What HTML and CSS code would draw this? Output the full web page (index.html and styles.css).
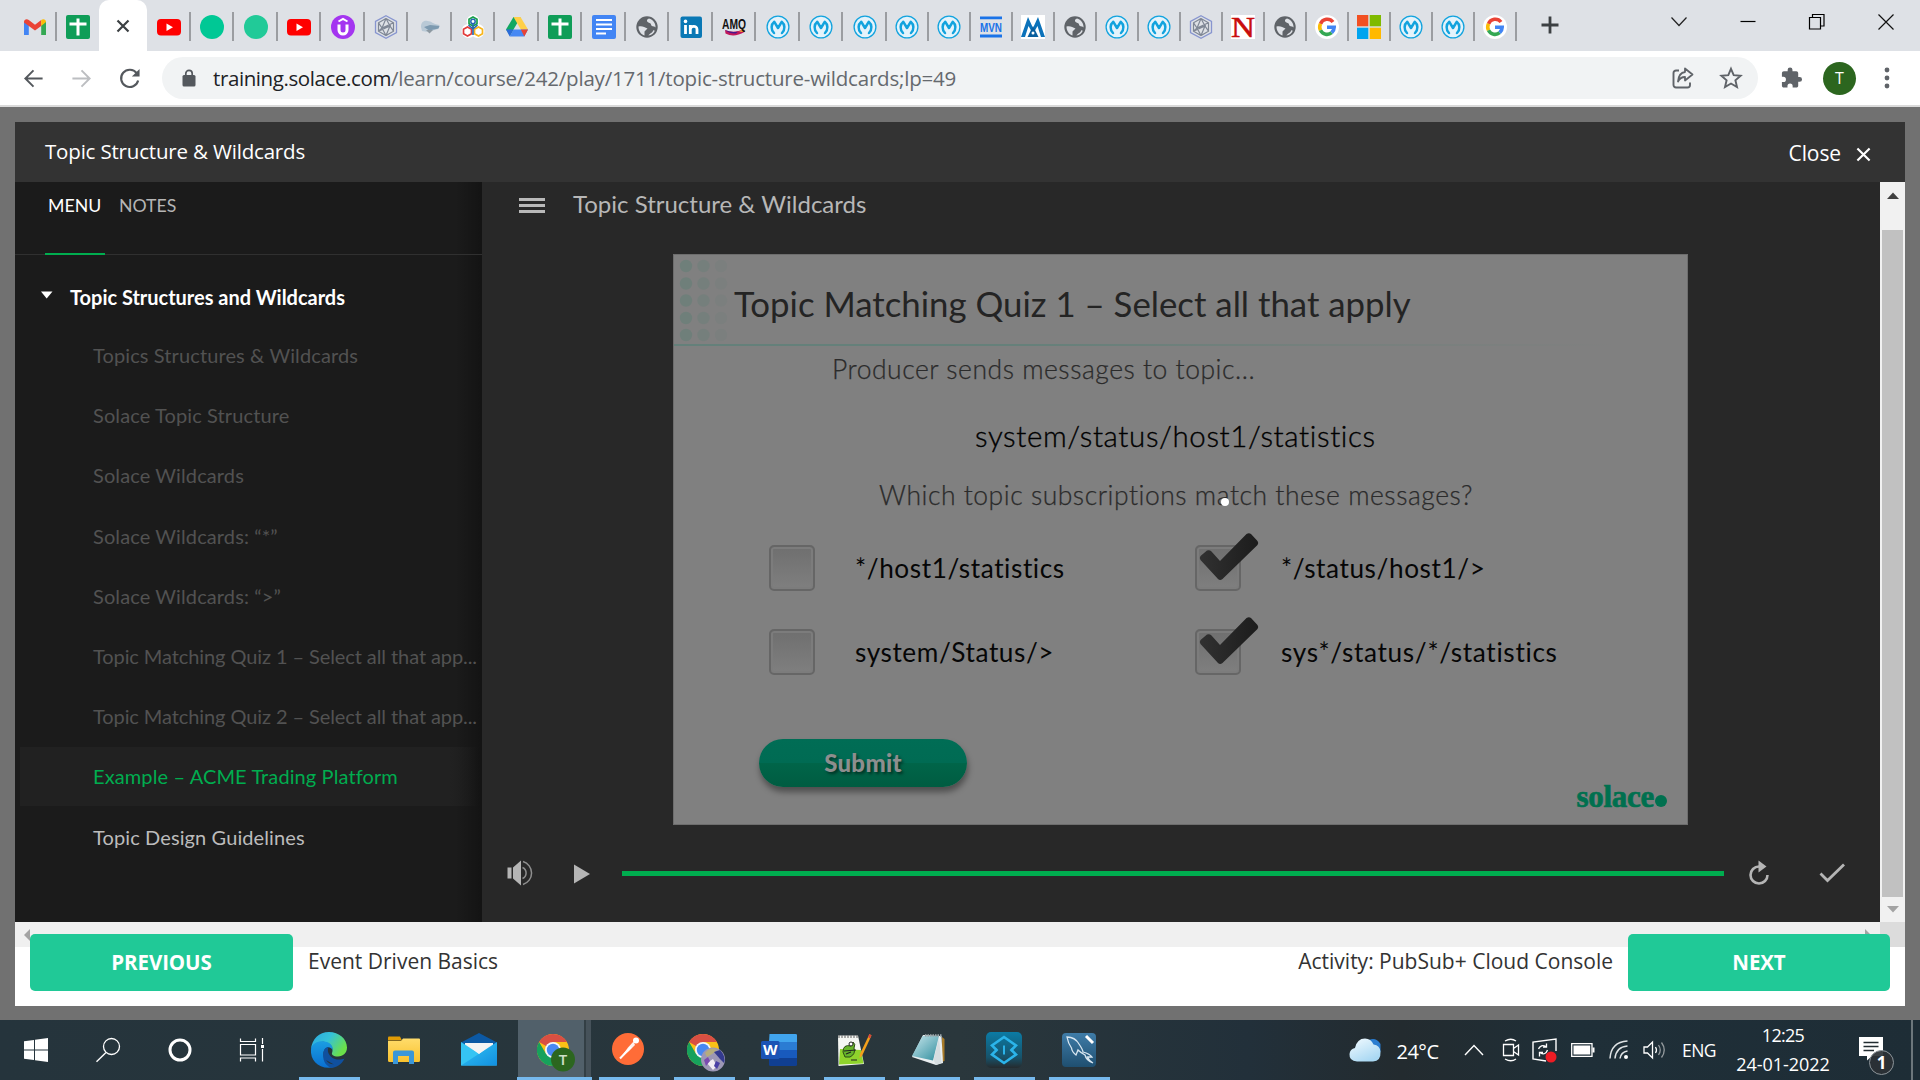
FILE: index.html
```html
<!DOCTYPE html>
<html lang="en">
<head>
<meta charset="utf-8">
<title>Topic Structure &amp; Wildcards</title>
<link rel="stylesheet" href="styles.css">
</head>
<body>
<svg class="defs" width="0" height="0">
  <defs>
    <linearGradient id="g-edge" x1="0" y1="0" x2="1" y2="0.5"><stop offset="0" stop-color="#2aa7e0"/><stop offset="0.5" stop-color="#35c1d8"/><stop offset="1" stop-color="#6be04a"/></linearGradient>
    <linearGradient id="g-edge2" x1="0" y1="0" x2="0" y2="1"><stop offset="0" stop-color="#1b9de2"/><stop offset="1" stop-color="#0a6fd0"/></linearGradient>
    <linearGradient id="g-mail" x1="0" y1="0" x2="1" y2="1"><stop offset="0" stop-color="#33c6f4"/><stop offset="1" stop-color="#128fe0"/></linearGradient>
    <linearGradient id="g-cloud" x1="0" y1="0" x2="0.6" y2="1"><stop offset="0" stop-color="#f3fbff"/><stop offset="1" stop-color="#a9d8f3"/></linearGradient>
    <linearGradient id="g-s" x1="0" y1="0" x2="0" y2="1"><stop offset="0" stop-color="#0b7ba5"/><stop offset="0.7" stop-color="#17536b"/><stop offset="1" stop-color="#252b2e"/></linearGradient>
    <linearGradient id="g-wb" x1="0" y1="0" x2="0" y2="1"><stop offset="0" stop-color="#3f7ca8"/><stop offset="1" stop-color="#1f4f70"/></linearGradient>
    <linearGradient id="g-note" x1="0" y1="0" x2="1" y2="1"><stop offset="0" stop-color="#c8e6ec"/><stop offset="1" stop-color="#2f8e9e"/></linearGradient>
    <linearGradient id="g-folder" x1="0" y1="0" x2="0" y2="1"><stop offset="0" stop-color="#ffdc6b"/><stop offset="1" stop-color="#f9c22e"/></linearGradient>
    <linearGradient id="g-tick" x1="0" y1="0" x2="1" y2="0"><stop offset="0" stop-color="#313131"/><stop offset="1" stop-color="#1c1c1c"/></linearGradient>
  </defs>
  <symbol id="mule" viewBox="0 0 24 24"><circle cx="12" cy="12" r="10.9" fill="#e4f3fb" stroke="#12a3de" stroke-width="1.3"/><path d="M8 18C4.600 14.500 5 9.500 8.300 6.800L12 13L15.700 6.800C19 9.500 19.400 14.500 16 18" fill="none" stroke="#12a3de" stroke-width="2.500" stroke-linejoin="round" stroke-linecap="round"/></symbol>
  <symbol id="sheets" viewBox="0 0 24 24"><rect width="24" height="24" rx="2" fill="#0f9d58"/><path d="M12 3.500V20.500M3.500 9H20.500" stroke="#fff" stroke-width="3"/></symbol>
  <symbol id="yt" viewBox="0 0 24 24"><rect y="4" width="24" height="16.500" rx="4" fill="#f00"/><path d="M9.500 8.500L16 12.200L9.500 16Z" fill="#fff"/></symbol>
  <symbol id="globe" viewBox="0 0 24 24"><circle cx="12" cy="12" r="10.700" fill="#5f6368"/><path d="M3.500 11.500C7 10.500 9.500 12 12.500 13.500L9.500 16.500V20.500C6 19.500 3.500 16 3.500 11.500ZM14 3.500C11 4.500 11.500 7 14.500 8C17 8.500 15 11.500 19 11.500C20 11.500 20.500 12.500 20.500 13C21 8.500 18 4.500 14 3.500Z" fill="#dee1e6"/><path d="M13.500 20.400C14.500 18.500 18 17.500 18.200 15.200C18.800 15 19.500 15.500 19.800 15.700C18.800 18.200 16.500 20 13.500 20.400Z" fill="#dee1e6"/></symbol>
  <symbol id="google" viewBox="0 0 24 24"><circle cx="12" cy="12" r="12" fill="#fff"/><g fill="none" stroke-width="3.600"><path d="M18 7A7.300 7.300 0 0 0 5.500 8.800" stroke="#ea4335"/><path d="M5.500 8.800A7.300 7.300 0 0 0 5.500 15.300" stroke="#fbbc05"/><path d="M5.500 15.300A7.300 7.300 0 0 0 16.700 17.600" stroke="#34a853"/><path d="M16.700 17.600A7.300 7.300 0 0 0 19.200 12.200H12" stroke="#4285f4"/></g></symbol>
  <symbol id="hexa" viewBox="0 0 24 24"><path d="M12 .8L22.500 6.500V17.500L12 23.200L1.500 17.500V6.500Z" fill="none" stroke="#8795cf" stroke-width="1.300"/><path d="M12 3.500L19.500 7.800V16.200L12 20.500L4.500 16.200V7.800ZM12 3.500L8 13L19.500 7.800M4.500 16.200L16 11L12 20.500M4.500 7.800L8 13L12 20.500M19.500 16.200L16 11L12 3.500M4.500 16.200L8 13L16 11" fill="none" stroke="#7f8795" stroke-width="1.200"/></symbol>
  <symbol id="chrome" viewBox="0 0 32 40"><circle cx="16" cy="20" r="16" fill="#fbc116"/><path d="M16 20L2.100 12A16 16 0 0 1 29.900 12H16Z" fill="#d94f43"/><path d="M2.100 12A16 16 0 0 0 16 36L23 24L9.100 24Z" fill="#17a15c"/><circle cx="16" cy="20" r="8" fill="#f4f6f8"/><circle cx="16" cy="20" r="6.200" fill="#4788f2"/></symbol>
</svg>

<header class="tabs">
  <div class="tab"><svg viewBox="0 0 24 24"><path d="M1 20V6.500L5.800 10V20Z" fill="#4285f4"/><path d="M23 20V6.500L18.200 10V20Z" fill="#34a853"/><path d="M1 7C1 4 4 3.500 5.800 5L12 9.700L18.200 5V11L12 15.500L1 7.500Z" fill="#ea4335"/><path d="M18.200 5C20 3.500 23 4 23 7L18.200 11Z" fill="#fbbc04"/></svg></div>
  <div class="tab plain"><svg><use href="#sheets"/></svg></div>
  <div class="tab active"><svg viewBox="0 0 24 24"><path d="M6.500 6.500L17.500 17.500M17.500 6.500L6.500 17.500" stroke="#3c4043" stroke-width="2.200"/></svg></div>
  <div class="tab"><svg><use href="#yt"/></svg></div>
  <div class="tab"><svg viewBox="0 0 24 24"><circle cx="12" cy="12" r="12" fill="#00c895"/></svg></div>
  <div class="tab"><svg viewBox="0 0 24 24"><circle cx="12" cy="12" r="12" fill="#21ca98"/></svg></div>
  <div class="tab"><svg><use href="#yt"/></svg></div>
  <div class="tab"><svg viewBox="0 0 24 24"><circle cx="12" cy="12" r="12" fill="#a435f0"/><path d="M7.500 6.500L12 4L16.500 6.500" fill="none" stroke="#fff" stroke-width="2"/><path d="M8 9.500V15A4 4 0 0 0 16 15V9.500" fill="none" stroke="#fff" stroke-width="3"/></svg></div>
  <div class="tab"><svg><use href="#hexa"/></svg></div>
  <div class="tab"><svg viewBox="0 0 24 24"><path d="M3 12C3 7 6 5 9.500 6C14 6 14 9 21.500 10L20 14L10 17L4 16Z" fill="#b9c9d6"/><path d="M6 12L12 10L21.500 11L20.500 13.500L11 15.500Z" fill="#7d9ab0"/><path d="M8 15L15 15L11.500 18.500Z" fill="#8d99a2"/></svg></div>
  <div class="tab"><svg viewBox="0 0 24 24"><circle cx="12" cy="6.500" r="6.500" fill="#fff"/><circle cx="7.500" cy="16" r="7" fill="#fff"/><circle cx="16.500" cy="16" r="7" fill="#fff"/><path d="M12 2L16 4.200V8.800L12 11L8 8.800V4.200Z" fill="none" stroke="#18a04c" stroke-width="1.700"/><path d="M6.500 12L10.500 14.200V18.800L6.500 21L2.500 18.800V14.200Z" fill="none" stroke="#e23a3a" stroke-width="1.700"/><path d="M17.500 12L21.500 14.200V18.800L17.500 21L13.500 18.800V14.200Z" fill="none" stroke="#f7b51c" stroke-width="1.700"/><circle cx="12" cy="6.500" r="2.200" fill="none" stroke="#2468b2" stroke-width="1.500"/><path d="M12 9V20M12 14L7.500 10M12 14L16.500 10" stroke="#2468b2" stroke-width="1.600"/></svg></div>
  <div class="tab"><svg viewBox="0 0 24 24"><path d="M8.500 2H15.500L12 8.500L5 20.500L1 14.500Z" fill="#11a861"/><path d="M8.500 2H15.500L23 14.500H15.800Z" fill="#ffcf48"/><path d="M4.700 21.500L8.500 14.500H23L19.300 21.500Z" fill="#4688f4"/><path d="M1 14.500L8.500 14.500L4.700 21.500Z" fill="#2a6bd8"/><path d="M15.800 14.500H23L19.300 21.500Z" fill="#e94335"/></svg></div>
  <div class="tab"><svg><use href="#sheets"/></svg></div>
  <div class="tab"><svg viewBox="0 0 24 24"><rect width="24" height="24" rx="2" fill="#4285f4"/><path d="M4 5H20M4 9.500H20M4 14H20M4 18.500H14" stroke="#fff" stroke-width="2.200"/></svg></div>
  <div class="tab"><svg><use href="#globe"/></svg></div>
  <div class="tab"><svg viewBox="0 0 24 24"><rect x="1.500" y="1.500" width="21.500" height="21.500" rx="2" fill="#0a78b5"/><path d="M6.500 10V19M11.300 10V19M11.300 19V14.500C11.300 10.500 18 10 18 14.500V19" stroke="#fff" stroke-width="2.800" fill="none"/><circle cx="6.500" cy="6.400" r="1.800" fill="#fff"/></svg></div>
  <div class="tab"><svg viewBox="0 0 24 24"><path d="M3 15Q12 19 22 14L22.500 17Q12 23 3.500 18.500Z" fill="#c2185b"/><path d="M3 15Q10 18 16 16.500L14 18.500Q8 19 3 15Z" fill="#4a148c"/><path d="M17 16.500L22 14L22.500 17Z" fill="#fbc02d"/><text x="12" y="14" text-anchor="middle" class="amq" textLength="24" lengthAdjust="spacingAndGlyphs">AMQ</text></svg></div>
  <div class="tab"><svg><use href="#mule"/></svg></div>
  <div class="tab"><svg><use href="#mule"/></svg></div>
  <div class="tab"><svg><use href="#mule"/></svg></div>
  <div class="tab narrow"><svg><use href="#mule"/></svg></div>
  <div class="tab narrow"><svg><use href="#mule"/></svg></div>
  <div class="tab narrow"><svg viewBox="0 0 24 24"><path d="M1 2.800H23M1 21H23" stroke="#1a73e8" stroke-width="2.800"/><text x="12" y="16.700" text-anchor="middle" class="mvn" textLength="22" lengthAdjust="spacingAndGlyphs">MVN</text></svg></div>
  <div class="tab narrow"><svg viewBox="0 0 24 24"><rect width="24" height="24" fill="#fff"/><path d="M0 22L7 2L12 13L17 2L24 22H20L16.500 11L12 19L7.500 11L4 22Z" fill="#0b72ba"/><path d="M12 11L17.500 22H6.500Z" fill="#0a5f9e"/><circle cx="12" cy="18" r="1.500" fill="#fff"/></svg></div>
  <div class="tab narrow"><svg><use href="#globe"/></svg></div>
  <div class="tab narrow"><svg><use href="#mule"/></svg></div>
  <div class="tab narrow"><svg><use href="#mule"/></svg></div>
  <div class="tab narrow"><svg><use href="#hexa"/></svg></div>
  <div class="tab narrow"><svg viewBox="0 0 24 24"><rect width="24" height="24" fill="#fff"/><text x="12" y="22" text-anchor="middle" class="nn" textLength="24" lengthAdjust="spacingAndGlyphs">N</text></svg></div>
  <div class="tab narrow"><svg><use href="#globe"/></svg></div>
  <div class="tab narrow"><svg><use href="#google"/></svg></div>
  <div class="tab narrow"><svg viewBox="0 0 24 24"><path d="M0 0H11.300V11.300H0Z" fill="#f25022"/><path d="M12.700 0H24V11.300H12.700Z" fill="#7fba00"/><path d="M0 12.700H11.300V24H0Z" fill="#00a4ef"/><path d="M12.700 12.700H24V24H12.700Z" fill="#ffb900"/></svg></div>
  <div class="tab narrow"><svg><use href="#mule"/></svg></div>
  <div class="tab narrow"><svg><use href="#mule"/></svg></div>
  <div class="tab narrow"><svg><use href="#google"/></svg></div>
  <div class="newtab"><svg viewBox="0 0 24 24"><path d="M12 3.500V20.500M3.500 12H20.500" stroke="#3c4043" stroke-width="2.800"/></svg></div>
  <div class="winbtns">
    <svg viewBox="0 0 20 20"><path d="M2.500 5.500L10 13.500L17.500 5.500" fill="none" stroke="#222" stroke-width="1.200"/></svg>
    <svg viewBox="0 0 20 20"><path d="M2.500 9.500H17.500" stroke="#000" stroke-width="1.200"/></svg>
    <svg viewBox="0 0 20 20"><path d="M2.500 5.500H13.500V17H2.500ZM5.500 5.500V2.500H17V14H13.500" fill="none" stroke="#000" stroke-width="1.200"/></svg>
    <svg viewBox="0 0 20 20"><path d="M2.500 2.500L17.500 17.500M17.500 2.500L2.500 17.500" stroke="#111" stroke-width="1.200"/></svg>
  </div>
</header>

<div class="toolbar">
  <div class="nav"><svg viewBox="0 0 24 24"><path d="M21.500 12H4M12 3.500L3.500 12L12 20.500" fill="none" stroke="#54585d" stroke-width="2"/></svg></div>
  <div class="nav"><svg viewBox="0 0 24 24"><path d="M2.500 12H20M12 3.500L20.500 12L12 20.500" fill="none" stroke="#bcbec1" stroke-width="2"/></svg></div>
  <div class="nav"><svg viewBox="0 0 24 24"><path d="M19.500 6.500A9 9 0 1 0 21 14" fill="none" stroke="#54585d" stroke-width="2.200"/><path d="M22.500 2V10H14.500Z" fill="#54585d"/></svg></div>
  <div class="omnibox">
    <svg class="lock" viewBox="0 0 14 18"><rect x=".5" y="6" width="13" height="11.500" rx="1.500" fill="#54585d"/><path d="M3.800 7V4.500A3.200 3.200 0 0 1 10.200 4.500V7" fill="none" stroke="#54585d" stroke-width="1.700"/></svg>
    <div class="url"><span>training.solace.com</span>/learn/course/242/play/1711/topic-structure-wildcards;lp=49</div>
    <svg class="share" viewBox="0 0 24 24"><path d="M8 4.500H5A2.500 2.500 0 0 0 2.500 7V19A2.500 2.500 0 0 0 5 21.500H16.500A2.500 2.500 0 0 0 19 19V16.500" fill="none" stroke="#5f6368" stroke-width="1.900"/><path d="M14 2.500L21.500 8.500L14 14.500V11C10.500 11 8.500 12.500 7 15.500C7.500 10 10 6.500 14 6Z" fill="none" stroke="#5f6368" stroke-width="1.800" stroke-linejoin="round"/></svg>
    <svg class="star" viewBox="0 0 24 24"><path d="M12 2.800L14.700 9.200L21.600 9.800L16.400 14.300L18 21.100L12 17.500L6 21.100L7.600 14.300L2.400 9.800L9.300 9.200Z" fill="none" stroke="#5f6368" stroke-width="1.900"/></svg>
  </div>
  <svg class="ext" viewBox="0 0 24 24"><path d="M20.500 11H19V7C19 5.900 18.100 5 17 5H13V3.500A2.500 2.500 0 0 0 8 3.500V5H4C2.900 5 2 5.900 2 7V10.800H3.500A2.700 2.700 0 0 1 3.500 16.200H2V20C2 21.100 2.900 22 4 22H7.800V20.500A2.700 2.700 0 0 1 13.200 20.500V22H17C18.100 22 19 21.100 19 20V16H20.500A2.500 2.500 0 0 0 20.500 11Z" fill="#5f6368"/></svg>
  <div class="avatar">T</div>
  <svg class="dots3" viewBox="0 0 6 22"><circle cx="3" cy="3" r="2.400" fill="#5f6368"/><circle cx="3" cy="11" r="2.400" fill="#5f6368"/><circle cx="3" cy="19" r="2.400" fill="#5f6368"/></svg>
</div>

<main class="page">
  <section class="modal">
    <div class="modal-head">
      <h1>Topic Structure &amp; Wildcards</h1>
      <div class="close">Close <svg viewBox="0 0 16 16"><path d="M1.500 1.500L14.500 14.500M14.500 1.500L1.500 14.500" stroke="#fff" stroke-width="2.300"/></svg></div>
    </div>
    <div class="player">
      <aside class="side">
        <div class="side-tabs"><span class="on">MENU</span><span>NOTES</span></div>
        <div class="group"><svg viewBox="0 0 12 8"><path d="M0 .5H11.500L5.700 7.500Z" fill="#fff"/></svg>Topic Structures and Wildcards</div>
        <ul>
          <li>Topics Structures &amp; Wildcards</li>
          <li>Solace Topic Structure</li>
          <li>Solace Wildcards</li>
          <li>Solace Wildcards: “*”</li>
          <li>Solace Wildcards: “&gt;”</li>
          <li class="long">Topic Matching Quiz 1 – Select all that app...</li>
          <li class="long">Topic Matching Quiz 2 – Select all that app...</li>
          <li class="current">Example – ACME Trading Platform</li>
          <li class="open">Topic Design Guidelines</li>
        </ul>
      </aside>
      <div class="stage">
        <div class="stage-head"><svg viewBox="0 0 26 16"><path d="M0 1.500H26M0 7.500H26M0 13.500H26" stroke="#b9b9b9" stroke-width="3"/></svg>Topic Structure &amp; Wildcards</div>
        <div class="slide">
          <div class="slide-head">
            <svg class="dotgrid" viewBox="0 0 50 90"><g fill="#6f7f7a"><circle cx="12" cy="11" r="6.200"/><circle cx="12" cy="28.500" r="6.200"/><circle cx="12" cy="45.500" r="6.200"/><circle cx="12" cy="63" r="6.200"/><circle cx="12" cy="80" r="6.200"/></g><g fill="#757f7c"><circle cx="29.500" cy="11" r="6.200"/><circle cx="29.500" cy="28.500" r="6.200"/><circle cx="29.500" cy="45.500" r="6.200"/><circle cx="29.500" cy="63" r="6.200"/><circle cx="29.500" cy="80" r="6.200"/></g><g fill="#7b7f7e"><circle cx="47" cy="11" r="6.200"/><circle cx="47" cy="28.500" r="6.200"/><circle cx="47" cy="45.500" r="6.200"/><circle cx="47" cy="63" r="6.200"/><circle cx="47" cy="80" r="6.200"/></g></svg>
            <h2>Topic Matching Quiz 1 – Select all that apply</h2>
          </div>
          <div class="rule"></div>
          <p class="producer">Producer sends messages to topic...</p>
          <p class="topic">system/status/host1/statistics</p>
          <p class="which">Which topic subscriptions match these messages?<i></i></p>
          <div class="options">
            <label><b class="box"></b><span class="o1">*/host1/statistics</span></label>
            <label><b class="box on"><svg viewBox="0 0 60 48"><path d="M1.500 23L8 17.500Q10.500 16.500 12.500 18.500L21 28L47.500 1Q50 -.5 52 1L58.500 8Q60 10 58.500 12L23.500 46Q21 48 19 46L1.500 27Q0 25 1.500 23Z" fill="url(#g-tick)"/></svg></b><span class="o2">*/status/host1/&gt;</span></label>
            <label><b class="box"></b><span class="o3">system/Status/&gt;</span></label>
            <label><b class="box on"><svg viewBox="0 0 60 48"><path d="M1.500 23L8 17.500Q10.500 16.500 12.500 18.500L21 28L47.500 1Q50 -.5 52 1L58.500 8Q60 10 58.500 12L23.500 46Q21 48 19 46L1.500 27Q0 25 1.500 23Z" fill="url(#g-tick)"/></svg></b><span class="o4">sys*/status/*/statistics</span></label>
          </div>
          <div class="slide-foot">
            <button class="submit">Submit</button>
            <div class="logo"><span>solace</span><i></i></div>
          </div>
        </div>
        <div class="controls">
          <svg class="vol" viewBox="0 0 26 26"><path d="M.5 7.500H4.500V18.500H.5ZM6 7.500L14 .5V25.500L6 18.500Z" fill="#b5b5b5"/><path d="M15.500 7.500A6 6 0 0 1 15.500 18.500M16 1.500A12 12 0 0 1 16 24.500" fill="none" stroke="#8f8f8f" stroke-width="1.500"/></svg>
          <svg class="play" viewBox="0 0 16 20"><path d="M0 .5V19.500L16 10Z" fill="#b5b5b5"/></svg>
          <div class="bar"></div>
          <svg class="replay" viewBox="0 0 22 26"><path d="M11 6.500A8.500 8.500 0 1 0 19.500 15" fill="none" stroke="#b5b5b5" stroke-width="2.600"/><path d="M10.500 .5L18.500 6.500L10.500 12.500Z" fill="#b5b5b5"/></svg>
          <svg class="tick" viewBox="0 0 26 20"><path d="M1.500 10.500L8.500 17.500L25 1.500" fill="none" stroke="#b5b5b5" stroke-width="2.800"/></svg>
        </div>
      </div>
      <div class="vbar"><svg viewBox="0 0 12 7"><path d="M0 7H12L6 .5Z" fill="#404040"/></svg><div></div><svg viewBox="0 0 12 7"><path d="M0 0H12L6 6.500Z" fill="#a3a3a3"/></svg></div>
    </div>
    <div class="modal-foot">
      <div class="hbar">
        <svg viewBox="0 0 6 12"><path d="M6 0V12L0 6Z" fill="#a3a3a3"/></svg>
        <svg class="r" viewBox="0 0 6 12"><path d="M0 0V12L6 6Z" fill="#a3a3a3"/></svg><b></b>
      </div>
      <div class="foot-row">
        <button class="btn prev">PREVIOUS</button><span>Event Driven Basics</span>
        <span class="act">Activity: PubSub+ Cloud Console</span><button class="btn next">NEXT</button>
      </div>
    </div>
  </section>
</main>

<footer class="taskbar">
  <div class="start"><svg viewBox="0 0 24 24"><path d="M0 3.300L10 1.900V11.500H0ZM11 1.700L24 0V11.500H11ZM0 12.500H10V22.100L0 20.700ZM11 12.500H24V24L11 22.300Z" fill="#fff"/></svg></div>
  <div class="start"><svg viewBox="0 0 24 24"><circle cx="15.500" cy="8.500" r="8" fill="none" stroke="#fff" stroke-width="1.300"/><path d="M10 14.500L.5 23.800" stroke="#fff" stroke-width="1.400"/></svg></div>
  <div class="start"><svg viewBox="0 0 24 24"><circle cx="12" cy="12" r="10" fill="none" stroke="#fff" stroke-width="3"/></svg></div>
  <div class="start"><svg viewBox="0 0 24 24"><path d="M.5 .5V3.500H15.500V.5M.5 23.500V20H15.500V23.500M.5 6.500H15.500V17H.5ZM22.500 0V6M22.500 11V23.500" fill="none" stroke="#fff" stroke-width="1.200"/><path d="M21 7H24V10H21Z" fill="#fff"/></svg></div>
  <div class="app first"><svg viewBox="0 0 36 36"><path d="M18 0C28 0 36 7 36 15.500C36 21 32 24.500 27 24.500C22 24.500 20.500 22.500 21 21C22 19 22.500 12 14 10C8 9 2 12 0 17C1 7 8 0 18 0Z" fill="url(#g-edge)"/><path d="M0 17C1 11 8 8.500 13.500 9.500C20 10.500 22.500 15 21.500 18C19 13 13 15 12.500 21C12 28 17 35 23 35.300C8 38 -1 29 0 17Z" fill="url(#g-edge2)"/><path d="M15 28C18.500 34 27 34 33.500 26.500C30.500 33 25 35.800 20 35.800C14 33.500 11 27 12.500 20C13 17 15 14.500 18 15C15.500 17 17 25 24 27C27.500 28 31 27.500 33.500 26.500C31 31 26 33 22 32Z" fill="#10509e"/></svg></div>
  <div class="app noline"><svg viewBox="0 0 36 36"><path d="M2 5.500Q2 4.500 3 4.500H14L16 8.500H2Z" fill="#e19c05"/><path d="M2 9H15L17 6.500H33Q34 6.500 34 7.500V28.500Q34 30 32.500 30H3.500Q2 30 2 28.500Z" fill="url(#g-folder)"/><path d="M7 32V20.500Q7 18.500 9 18.500H26Q28 18.500 28 20.500V32H23V24H12V32Z" fill="#3b97d8"/></svg></div>
  <div class="app noline"><svg viewBox="0 0 36 36"><path d="M0 10.500L18 1L36 10.500L30 15H6Z" fill="#0c59a4"/><path d="M4 11H32V24H4Z" fill="#f2f2f2"/><path d="M0 10L36 33.500H0Z" fill="#35c4f3"/><path d="M36 10V33.500H0Z" fill="url(#g-mail)"/><path d="M4 11H32L18 22Z" fill="#f4f4f4"/></svg></div>
  <div class="app focus"><svg class="ch" viewBox="0 0 38 40"><use href="#chrome" width="32" height="40" y="-2"/><circle cx="26" cy="27.500" r="12" fill="#2c661f"/><text x="26" y="33" text-anchor="middle" class="bt">T</text></svg></div>
  <div class="app"><svg viewBox="0 0 36 36"><circle cx="17" cy="17" r="16" fill="#ff6c37"/><path d="M9.500 26L17 15.500L22.500 9.500L24 13L18 19Z" fill="#fff" opacity=".9"/><circle cx="25" cy="8.500" r="3" fill="#fff"/><path d="M9 26.500L20 15" stroke="#fff" stroke-width="2"/></svg></div>
  <div class="app"><svg class="ch" viewBox="0 0 38 40"><use href="#chrome" width="32" height="40" y="-2"/><circle cx="26" cy="27.500" r="12" fill="#9c97b5"/><path d="M18 21Q24 14 30 18Q26 22 20 25Z" fill="#b5ad7d"/><path d="M27 20L33 18Q39 24 37 31L33 27Z" fill="#333a8e"/><path d="M20 31L26 27L30 34L26 38Z" fill="#f1ecf4"/><path d="M17 28L21 25L23 29L19 34Z" fill="#7a4bb0"/><path d="M29 29L33 31L30 37L27 34Z" fill="#4a3fa5"/></svg></div>
  <div class="app"><svg viewBox="0 0 36 36"><path d="M8.500 2H34.500Q36 2 36 3V10H8Z" fill="#41a5ee"/><path d="M8 10H36V18H8Z" fill="#2b7cd3"/><path d="M8 18H36V26H8Z" fill="#185abd"/><path d="M8 26H36V32.500Q36 34 34.500 34H9.500Q8 34 8 32.500Z" fill="#103f91"/><rect y="9" width="18.500" height="18" rx="1.500" fill="#1a53b5"/><text x="9.300" y="22.800" text-anchor="middle" class="ww">W</text></svg></div>
  <div class="app"><svg viewBox="0 0 36 36"><path d="M2 3.500H22L28 32L2.500 34Z" fill="#f5f7f3"/><path d="M4 17L25 18L27.500 31.500L3 32.500Z" fill="#8fd32c"/><path d="M3 3V6M6 3V6M9 3V6M12 3V6M15 3V6M18 3V6M21 3V6" stroke="#777" stroke-width="1.200"/><path d="M7 20Q7 12 15 14L17 10Q20 12 18 16Q20 22 14 25L9 25Z" fill="#67b52a" stroke="#2b4a14" stroke-width="1"/><circle cx="15" cy="12" r="2" fill="#fff" stroke="#222"/><path d="M8 19L20 18M10 22L15 20M15 28H21" stroke="#222" stroke-width="1.200"/><path d="M33.500 2L35.500 3.500L26 24L23.500 26L24 22Z" fill="#f3a01c"/><path d="M33.500 2L35.500 3.500L34 6.500L32 5Z" fill="#d6453c"/></svg></div>
  <div class="app"><svg viewBox="0 0 36 36"><path d="M31 5L33.500 7V29L30 30Z" fill="#a87b28"/><path d="M12 3L30.500 4L32 31L25 33L1 25Z" fill="#e9eef0"/><path d="M11.500 4H28L22 28.500L1 24Z" fill="url(#g-note)"/><path d="M14 3.500H31" stroke="#9aa7ab" stroke-width="2.500" stroke-dasharray="1.500 1"/><path d="M28 6L30.500 31L25 33L22.500 28Z" fill="#d5dde0"/></svg></div>
  <div class="app"><svg viewBox="0 0 36 36"><rect width="36" height="36" rx="5" fill="url(#g-s)"/><path d="M11.500 19L6 13.500L18 5L30 13.500L24.500 19M11.500 17L6 22.500L18 31L30 22.500L24.500 17" fill="none" stroke="#2bb4ea" stroke-width="2.600"/><path d="M18 13.500V22.500" stroke="#2bb4ea" stroke-width="2"/></svg></div>
  <div class="app"><svg viewBox="0 0 36 36"><rect x="1" y="1" width="34" height="34" rx="4" fill="url(#g-wb)"/><path d="M6 5Q14 5 18 12Q22 18 22 20Q29 22 31 25L26.500 25Q28 29 32 31Q25 28 24 23Q19 20 17 18L15 23Q11 20 10.500 16Q7 11 6 5Z" fill="none" stroke="#d8e6f0" stroke-width="1.300"/><path d="M25 4L29 8L32 11" stroke="#fff" stroke-width="3"/></svg></div>
  <div class="tray">
    <div><svg width="32" height="24" viewBox="0 0 32 24"><path d="M20 2Q27 -1 31.500 6V14H20Z" fill="#2b7dd0"/><path d="M8 23.500Q0 23 .5 16Q1 11 6 10Q8 .5 16 .5Q22 .5 24.500 6.500Q31 7 31.500 14Q32 23 24 23.500Z" fill="url(#g-cloud)"/></svg></div>
    <div class="temp">24°C</div>
    <div><svg width="20" height="12" viewBox="0 0 20 12"><path d="M1 11L10 1.500L19 11" fill="none" stroke="#fff" stroke-width="1.400"/></svg></div>
    <div><svg width="18" height="24" viewBox="0 0 18 24"><path d="M1.500 6.500H11.500V17.500H1.500ZM11.500 10.500L16.500 7V17L11.500 13.500M3 3Q9 -.5 14 3M3 21Q9 24.500 14 21" fill="none" stroke="#fff" stroke-width="1.300"/></svg></div>
    <div><svg width="26" height="26" viewBox="0 0 26 26"><path d="M14 24L1 22V5L24 2V14" fill="none" stroke="#fff" stroke-width="1.400"/><path d="M6.500 12Q9 7 14 9.500M14.500 6.500V10H11M15.500 13Q13.500 18.500 8.500 16M7.500 19.500V15.500H11" fill="none" stroke="#fff" stroke-width="1.300"/><circle cx="19" cy="20" r="5.500" fill="#ee1c24"/></svg></div>
    <div><svg width="24" height="14" viewBox="0 0 24 14"><path d="M.7 .7H21V13.300H.7Z" fill="none" stroke="#fff" stroke-width="1.300"/><path d="M2.500 2.500H19.200V11.500H2.500ZM21.500 4.500H23.500V9.500H21.500Z" fill="#fff"/></svg></div>
    <div><svg width="20" height="20" viewBox="0 0 20 20"><path d="M18.500 1Q2 2 1 18.500M18.500 6Q7 7 6 18.500M18.500 11Q12 12 11 18.500" fill="none" stroke="#dfe3e5" stroke-width="1.500"/><circle cx="17" cy="17" r="2" fill="#fff"/></svg></div>
    <div><svg width="23" height="20" viewBox="0 0 23 20"><path d="M1 7H4.500L9.500 2V18L4.500 13H1Z" fill="none" stroke="#fff" stroke-width="1.300"/><path d="M12.500 7Q14.500 10 12.500 13" fill="none" stroke="#fff" stroke-width="1.300"/><path d="M15.500 5Q19 10 15.500 15M18.500 2.500Q24 10 18.500 17.500" fill="none" stroke="#93999d" stroke-width="1.300"/></svg></div>
    <div class="eng">ENG</div>
    <div class="clock"><span class="t">12:25</span><span>24-01-2022</span></div>
    <div class="notif"><svg width="24" height="24" viewBox="0 0 24 24"><path d="M0 0H24V19H13L8 23.500V19H0Z" fill="#fff"/><path d="M4.500 5.500H19.500M4.500 9.500H19.500M4.500 13.500H15" stroke="#222c31" stroke-width="1.300"/></svg><span class="badge">1</span></div>
    <div class="peek"></div>
  </div>
</footer>
</body>
</html>
```
FILE: styles.css
```css
* { box-sizing: border-box; }
body { margin: 0; width: 1920px; height: 1080px; overflow: hidden; display: flex; flex-direction: column; background: #717171; font-family: "Open Sans", "Noto Sans", sans-serif; }
h1, h2, p, ul { margin: 0; padding: 0; font-weight: 400; list-style: none; }
button { border: 0; padding: 0; font-family: inherit; }
svg { display: block; flex: none; overflow: visible; }
.defs { position: absolute; }

/* browser tabs */
.tabs { height: 51px; flex: none; background: #dee1e6; display: flex; padding-left: 13px; }
.tab { width: 43.5px; height: 29px; margin-top: 12px; padding-left: 1.5px; flex: none; display: flex; align-items: center; justify-content: center; border-right: 2px solid #9b9da1; }
.tab svg, .newtab svg { width: 24px; height: 24px; }
.tab.narrow { width: 42px; }
.tab.plain { width: 42.5px; border-right-color: transparent; }
.tab.active { width: 48px; height: 51px; margin-top: 0; padding: 0; border: 0; background: #fff; border-radius: 10px 10px 0 0; }
.amq { font: 900 14px "Liberation Sans", sans-serif; fill: #111; }
.mvn { font: 700 13px "Liberation Sans", sans-serif; fill: #1a73e8; }
.nn { font: 400 30px "Liberation Serif", serif; fill: #c90d0d; stroke: #c90d0d; stroke-width: .5px; }
.newtab { margin: 13px 0 0 21px; }
.winbtns { margin-left: auto; padding: 12px 24px 0 0; display: flex; gap: 49px; }
.winbtns svg { width: 20px; height: 20px; }

/* toolbar */
.toolbar { height: 56px; flex: none; background: #fff; border-bottom: 2px solid #dadada; display: flex; align-items: center; padding-left: 9px; }
.nav { width: 48px; display: flex; justify-content: center; }
.nav svg { width: 23px; height: 23px; }
.omnibox { width: 1596px; height: 42px; margin-left: 9px; border-radius: 21px; background: #f1f3f4; display: flex; align-items: center; padding: 0 15px 0 20px; }
.lock { width: 14px; height: 18px; }
.url { margin-left: 17px; flex: 1; font-size: 20.5px; letter-spacing: -0.2px; color: #65696e; white-space: nowrap; }
.url span { color: #202124; letter-spacing: -0.4px; }
.share, .star { width: 24px; height: 24px; }
.star { margin-left: 24px; }
.ext { width: 23px; height: 26px; margin-left: 22px; }
.avatar { width: 33px; height: 33px; margin-left: 20px; border-radius: 50%; background: #2c661f; color: #fff; font-size: 16px; text-align: center; line-height: 33px; }
.dots3 { width: 6px; height: 22px; margin-left: 28px; }

/* modal */
.page { height: 913px; flex: none; padding: 15px 15px 0; }
.modal { height: 884px; background: #fff; display: flex; flex-direction: column; }
.modal-head { height: 60px; background: #333; color: #fff; padding: 0 34px 0 30px; display: flex; justify-content: space-between; }
.modal-head h1 { font-size: 20.5px; letter-spacing: -0.18px; line-height: 58px; }
.close { height: 60px; font-size: 21px; letter-spacing: -0.1px; display: flex; align-items: center; gap: 15px; padding-top: 1px; }
.close svg { width: 15px; height: 15px; margin-top: 3px; }
.player { height: 740px; display: flex; background: #282828; }

.side { width: 467px; background: linear-gradient(90deg, transparent 440px, rgba(0,0,0,.28)), #1b1b1b; font-family: Lato, sans-serif; }
.side-tabs { height: 73px; border-bottom: 1px solid #303030; padding-left: 30px; display: flex; font-size: 17.7px; line-height: 48px; color: #b5b5b5; }
.side-tabs span { width: 74px; height: 73px; }
.side-tabs .on { width: 60px; padding-left: 3px; margin-right: 14px; color: #fff; border-bottom: 2px solid #00ad4f; }
.group { height: 84px; display: flex; align-items: center; padding-left: 26px; color: #fff; font-weight: 700; font-size: 20px; letter-spacing: -.02px; }
.group svg { width: 12px; height: 8px; margin: -4px 17px 0 0; }
.side ul { padding: 0 4px 0 5px; margin-top: -13px; }
.side li { height: 60.200px; line-height: 59px; padding-left: 73px; font-size: 20px; letter-spacing: .11px; color: #525252; white-space: nowrap; }
.side li.long { letter-spacing: -0.09px; }
.side li.current { color: #00ad4f; background: linear-gradient(90deg, #212121 430px, transparent) 0 0 / 100% 59px no-repeat; }
.side li.open { color: #bcbcbc; }

.stage { width: 1398px; display: flex; flex-direction: column; }
.stage-head { height: 72px; display: flex; gap: 28px; padding-left: 37px; line-height: 44px; font-family: Lato, sans-serif; font-size: 24px; color: #b7b7b7; }
.stage-head svg { width: 26px; height: 16px; margin-top: 16px; }
.slide { width: 1015px; height: 571px; margin-left: 191px; background: #808080; border: 1px solid #6d6d6d; font-family: Lato, "Open Sans", sans-serif; color: #2b2b2b; }
.slide-head { height: 89px; display: flex; gap: 10px; }
.dotgrid { width: 50px; height: 90px; }
.slide h2 { font-size: 34.800px; line-height: 97px; color: #242424; white-space: nowrap; }
.rule { height: 2px; background: linear-gradient(90deg, #64807a, #66807a 35%, #76807d 65%, #808080 93%); }
.slide p { white-space: nowrap; font-weight: 300; font-size: 26.500px; letter-spacing: .52px; -webkit-text-stroke: .25px #2b2b2b; }
.producer { padding-left: 158px; line-height: 46px; }
.slide .topic { padding-left: 301px; line-height: 88px; font-size: 29.500px; letter-spacing: .62px; color: #000; -webkit-text-stroke: .35px #000; }
.which { padding-left: 205px; line-height: 30px; position: relative; }
.which i { position: absolute; left: 547px; top: 18px; width: 8px; height: 8px; border-radius: 50%; background: #fff; }
.options { display: grid; grid-template-columns: 426px 1fr; grid-auto-rows: 84px; margin: 16px 0 0 95px; }
.options label { display: flex; align-items: center; font-size: 26.200px; letter-spacing: .58px; color: #060606; white-space: nowrap; }
.options .o4 { letter-spacing: .68px; }
.box { width: 46px; height: 46px; margin-right: 40px; border: 2px solid #666; border-radius: 5px; background: linear-gradient(#6f6f6f, #7f7f7f); box-shadow: inset 0 0 0 2px #7c7c7c; position: relative; flex: none; }
.box svg { position: absolute; left: 2px; top: -14px; width: 60px; height: 48px; }
.slide-foot { height: 131px; display: flex; justify-content: space-between; padding: 45px 20px 0 85px; }
.submit { width: 208px; height: 48px; border-radius: 24px; background: linear-gradient(#006d55 0, #006b53 50%, #006549 50%, #005c41 100%); box-shadow: 1px 5px 6px rgba(0,0,0,.4); color: #8e8e8e; font: 900 24px/48px Lato, sans-serif; letter-spacing: .3px; text-shadow: 2px 2px 3px rgba(0,0,0,.5); }
.logo { display: flex; align-items: flex-end; height: 74px; color: #00704f; }
.logo span { font: 700 31px/32px "Liberation Serif", serif; letter-spacing: -.3px; -webkit-text-stroke: .7px #00704f; }
.logo i { width: 12px; height: 12px; margin: 0 0 6px 1px; border-radius: 50%; background: #00704f; }
.controls { display: flex; align-items: center; height: 96px; padding-left: 25px; }
.vol { width: 26px; height: 26px; }
.play { width: 16px; height: 20px; margin-left: 41px; margin-top: 2px; }
.bar { width: 1102px; height: 5px; margin-left: 32px; background: #00ad4f; }
.replay { width: 22px; height: 26px; margin-left: 24px; }
.tick { width: 26px; height: 20px; margin-left: 49px; }
.vbar { width: 25px; background: #f1f1f1; display: flex; flex-direction: column; align-items: center; padding: 10px 0 9px; }
.vbar div { width: 21px; height: 667px; margin-top: 31px; background: #c1c1c1; }
.vbar svg { width: 12px; height: 7px; }
.vbar svg:last-child { margin-top: 9px; }

.modal-foot { height: 84px; }
.hbar { height: 25px; background: #f0f0f0; display: flex; align-items: center; padding-left: 9px; }
.hbar svg { width: 6px; height: 12px; }
.hbar .r { margin-left: auto; margin-right: 9px; }
.hbar b { width: 25px; height: 25px; background: #dcdcdc; }
.foot-row { position: relative; margin-top: -13px; height: 57px; display: flex; align-items: center; padding: 0 15px; font-size: 21px; color: #333; white-space: nowrap; }
.foot-row span { line-height: 54px; height: 57px; }
.btn { height: 57px; border-radius: 5px; background: #20c997; color: #fff; font-weight: 700; font-size: 20.5px; letter-spacing: -.1px; line-height: 57px; }
.prev { width: 263px; margin-right: 15px; }
.next { width: 262px; margin-left: 15px; }
.act { margin-left: auto; }

/* taskbar */
.taskbar { height: 60px; flex: none; display: flex; background: linear-gradient(90deg, #25343c, #28363c 40%, #2a373c 50%, #22303a 65%, #232b2f 73%, #1f2f38 82%, #1e2d36); color: #fff; }
.start { width: 72px; display: flex; align-items: center; justify-content: center; }
.start svg { width: 24px; height: 24px; }
.app { width: 61px; margin: 0 7px; border-bottom: 3px solid #76b9ed; display: flex; justify-content: center; padding-top: 12px; }
.app svg { width: 36px; height: 36px; margin-left: -1px; }
.app svg.ch { width: 38px; height: 40px; margin-left: 2px; }
.app.first { margin-left: 11px; }
.app.noline { border-color: transparent; }
.app.focus { width: 75px; margin: 0; background: linear-gradient(90deg, transparent 1px, #51606a 1px 67px, #333f45 67px 69px, #46525a 69px 74px, transparent 74px); border-image: linear-gradient(90deg, #76b9ed 74px, transparent 74px) 3; border-image-width: 0 0 3px 0; }
.bt { font: 600 15px "Open Sans", sans-serif; fill: #cfe0ca; }
.ww { font: 700 15px "Open Sans", sans-serif; fill: #fff; }
.tray { margin-left: auto; display: grid; grid-template-columns: 50px 55px 58px 16px 52px 24px 48px 22px 68px 100px 78px 9px; white-space: nowrap; }
.tray > div { display: flex; align-items: center; justify-content: center; min-width: 0; }
.temp { font-size: 20px; letter-spacing: -.5px; padding-top: 3px; }
.eng { font-size: 17.500px; letter-spacing: -.6px; }
.tray > .clock { flex-direction: column; font-size: 18px; line-height: 28.500px; letter-spacing: -.05px; padding-bottom: 1px; }
.clock .t { letter-spacing: -.7px; }
.tray > .notif { position: relative; padding: 0 3px 0 0; }
.notif svg { margin-top: -2px; }
.badge { position: absolute; left: 36px; top: 30px; width: 25px; height: 25px; border: 1px solid #8d959a; border-radius: 50%; background: rgba(43,49,53,.92); font-size: 17px; font-weight: 700; line-height: 23px; text-align: center; }
.tray > .peek { border-left: 2px solid #6d777c; }
```
